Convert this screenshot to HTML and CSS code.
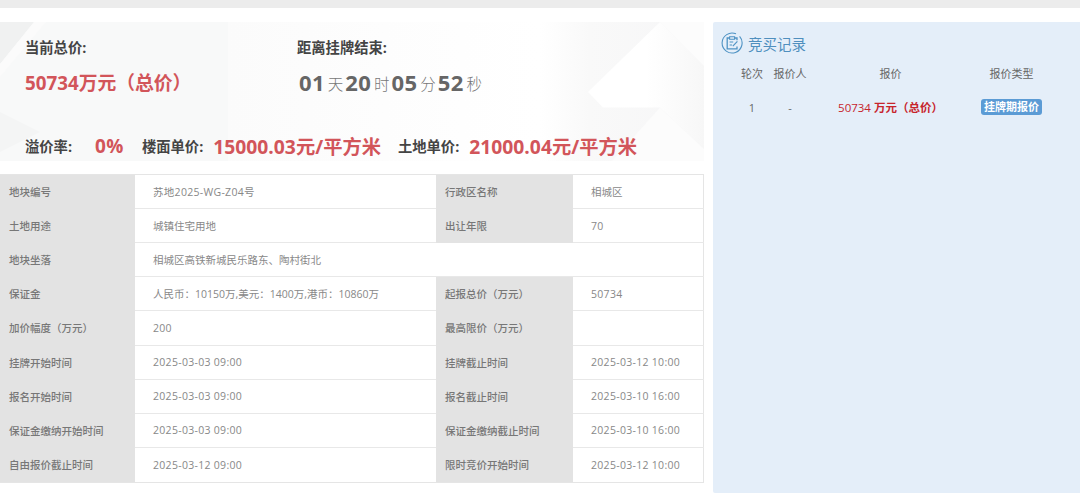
FILE: index.html
```html
<!DOCTYPE html>
<html lang="zh">
<head>
<meta charset="utf-8">
<title>竞买记录</title>
<link rel="stylesheet" href="styles.css">
</head>
<body>
<div class="topbar"></div>
<main class="layout">
  <section class="left">
    <div class="hero">
      <svg class="hero-bg" viewBox="0 0 704 139" preserveAspectRatio="none" aria-hidden="true">
        <defs>
          <linearGradient id="fadeMid" x1="0" x2="1" y1="0" y2="0">
            <stop offset="0" stop-color="#fbfbfb"/>
            <stop offset="1" stop-color="#ffffff"/>
          </linearGradient>
          <linearGradient id="fadeRight" x1="0" x2="1" y1="0" y2="0">
            <stop offset="0" stop-color="#ffffff"/>
            <stop offset="0.3" stop-color="#f9f9f9"/>
            <stop offset="1" stop-color="#f6f6f7"/>
          </linearGradient>
          <linearGradient id="arrowFade" x1="0" x2="1" y1="0" y2="0">
            <stop offset="0.5" stop-color="#ffffff"/>
            <stop offset="1" stop-color="#f7f7f7"/>
          </linearGradient>
        </defs>
        <rect x="0" y="0" width="228" height="139" fill="#f8f9f9"/>
        <rect x="228" y="0" width="312" height="139" fill="url(#fadeMid)"/>
        <rect x="540" y="0" width="164" height="139" fill="url(#fadeRight)"/>
        <polygon points="0,0 34,0 0,42" fill="#f0f1f1"/>
        <polygon points="34,0 46,0 0,55 0,42" fill="#fbfbfb"/>
        <polygon points="0,90 40,110 0,130" fill="#f4f5f5"/>
        <polygon points="588,70 660,0 704,44 704,127 660,85.5 603,85.5" fill="url(#arrowFade)"/>
        <polygon points="660,0 704,0 704,44" fill="#fcfcfc"/>
        <polygon points="660,85.5 704,127 704,139 612,139" fill="#fcfcfc"/>
      </svg>
      <div class="hero-top">
        <div class="hero-col price-col">
          <div class="hero-label">当前总价:</div>
          <div class="total">50734万元（总价）</div>
        </div>
        <div class="hero-col time-col">
          <div class="hero-label">距离挂牌结束:</div>
          <div class="count"><b>01</b><span>天</span><b>20</b><span>时</span><b>05</b><span>分</span><b>52</b><span>秒</span></div>
        </div>
      </div>
      <div class="hero-bottom">
        <span class="hero-label">溢价率:</span><em class="rate">0%</em>
        <span class="hero-label">楼面单价:</span><em class="unit">15000.03元/平方米</em>
        <span class="hero-label">土地单价:</span><em class="unit">21000.04元/平方米</em>
      </div>
    </div>
    <div class="info">
      <div class="th">地块编号</div><div class="td num">苏地2025-WG-Z04号</div><div class="th">行政区名称</div><div class="td">相城区</div>
      <div class="th">土地用途</div><div class="td">城镇住宅用地</div><div class="th">出让年限</div><div class="td num">70</div>
      <div class="th">地块坐落</div><div class="td wide">相城区高铁新城民乐路东、陶村街北</div>
      <div class="th">保证金</div><div class="td">人民币：10150万,美元：1400万,港币：10860万</div><div class="th">起报总价（万元）</div><div class="td num">50734</div>
      <div class="th">加价幅度（万元）</div><div class="td num">200</div><div class="th">最高限价（万元）</div><div class="td"></div>
      <div class="th">挂牌开始时间</div><div class="td num">2025-03-03 09:00</div><div class="th">挂牌截止时间</div><div class="td num">2025-03-12 10:00</div>
      <div class="th">报名开始时间</div><div class="td num">2025-03-03 09:00</div><div class="th">报名截止时间</div><div class="td num">2025-03-10 16:00</div>
      <div class="th">保证金缴纳开始时间</div><div class="td num">2025-03-03 09:00</div><div class="th">保证金缴纳截止时间</div><div class="td num">2025-03-10 16:00</div>
      <div class="th">自由报价截止时间</div><div class="td num">2025-03-12 09:00</div><div class="th">限时竞价开始时间</div><div class="td num">2025-03-12 10:00</div>
    </div>
  </section>
  <aside class="panel">
    <h2 class="panel-title">
      <svg class="panel-icon" viewBox="0 0 22 22" aria-hidden="true">
        <path d="M15 1.8A10 10 0 1 0 18.6 4.4" fill="none" stroke="#4f93c4" stroke-width="1.1"/>
        <path d="M16 8.2V6H6.2v10.8h9.8V14.6" fill="none" stroke="#4f93c4" stroke-width="1.3"/>
        <path d="M8.6 4.8h5V7.2h-5z" fill="#e4eef9" stroke="#4f93c4" stroke-width="1.1"/>
        <path d="M8.6 10h3.6M8.6 13h2.4M11.8 14.2l4.6-4.8" fill="none" stroke="#4f93c4" stroke-width="1.2"/>
      </svg>
      竞买记录
    </h2>
    <div class="bids">
      <div class="bid-head">轮次</div><div class="bid-head">报价人</div><div class="bid-head">报价</div><div class="bid-head">报价类型</div>
      <div class="bid-cell">1</div><div class="bid-cell">-</div>
      <div class="bid-cell bid-price">50734 <b>万元（总价）</b></div>
      <div class="bid-cell"><span class="tag">挂牌期报价</span></div>
    </div>
  </aside>
</main>
</body>
</html>
```
FILE: styles.css
```css
* { box-sizing: border-box; }
html, body { margin: 0; padding: 0; }
body {
  width: 1080px;
  height: 496px;
  overflow: hidden;
  background: #fff;
  font-family: "Open Sans", "Noto Sans CJK SC", sans-serif;
  color: #777;
}
.topbar { height: 8px; background: #ececec; }
.layout { display: flex; gap: 9px; padding-top: 14px; align-items: flex-start; }
.left { width: 704px; }

.hero {
  position: relative;
  height: 139px;
  padding: 15px 0 0 25px;
  overflow: hidden;
}
.hero-bg { position: absolute; inset: 0; width: 100%; height: 100%; }
.hero-top { position: relative; display: flex; }
.hero-col { display: flex; flex-direction: column; }
.price-col { width: 272px; }
.hero-label { font-size: 14.3px; line-height: 22px; font-weight: 700; color: #444; white-space: nowrap; }
.total { margin-top: 11px; font-size: 18.8px; line-height: 26px; font-weight: 700; color: #d2555a; white-space: nowrap; }
.count { display: flex; align-items: center; margin: 10px 0 0 2px; height: 26px; color: #666; }
.count b { font-size: 22px; font-weight: 700; letter-spacing: 0.3px; }
.count span { font-size: 15.5px; margin: 2px 2px 0 3px; font-weight: 300; color: #777; }
.hero-bottom {
  position: relative;
  display: flex;
  align-items: center;
  margin-top: 37px;
  height: 26px;
}
.hero-bottom .hero-label { padding-top: 2px; }
.hero-bottom em { font-style: normal; font-weight: 700; color: #d2555a; font-size: 19.3px; white-space: nowrap; }
.hero-bottom .rate { margin: 0 18px 0 23px; font-size: 19px; letter-spacing: 0.5px; }
.hero-bottom .unit { margin: 0 17px 0 10px; }

.info {
  display: grid;
  grid-template-columns: 135px 301px 137px 131px;
  grid-template-rows: repeat(9, 1fr);
  height: 309px;
  margin-top: 13px;
  border-top: 1px solid #e5e5e5;
  border-right: 1px solid #e5e5e5;
  border-bottom: 1px solid #e5e5e5;
  font-size: 10.5px;
}
.th, .td {
  display: flex;
  align-items: center;
  border-bottom: 1px solid #e8e8e8;
  white-space: nowrap;
}
.th { padding-left: 9px; background: #e3e3e3; font-weight: 500; color: #777; border-bottom-color: #e3e3e3; }
.td { padding-left: 18px; color: #888; }
.td.num { letter-spacing: 0.3px; }
.td.wide { grid-column: span 3; }
.th:nth-last-child(-n+4), .td:nth-last-child(-n+4) { border-bottom: 0; }

.panel {
  width: 367px;
  height: 471px;
  background: #e4eef9;
  padding: 9px 0 0 8px;
  border-radius: 2px 0 0 2px;
}
.panel-title {
  display: flex;
  align-items: center;
  gap: 5px;
  margin: 0;
  height: 24px;
  font-size: 14.5px;
  font-weight: 400;
  color: #4f8fbe;
}
.panel-icon { width: 22px; height: 22px; }
.bids {
  display: grid;
  grid-template-columns: 22px 54px 147px 95px;
  grid-template-rows: 26px 42px;
  margin-top: 5px;
  padding-left: 20px;
  justify-items: center;
  align-items: center;
  font-size: 11px;
  color: #666;
  white-space: nowrap;
}
.bid-price { color: #c7242c; font-size: 11.5px; }
.bid-price b { font-weight: 700; }
.tag {
  display: inline-block;
  padding: 0 3px;
  line-height: 16px;
  font-size: 11px;
  font-weight: 700;
  color: #fff;
  background: #5b9bd5;
  border-radius: 3px;
}
```
